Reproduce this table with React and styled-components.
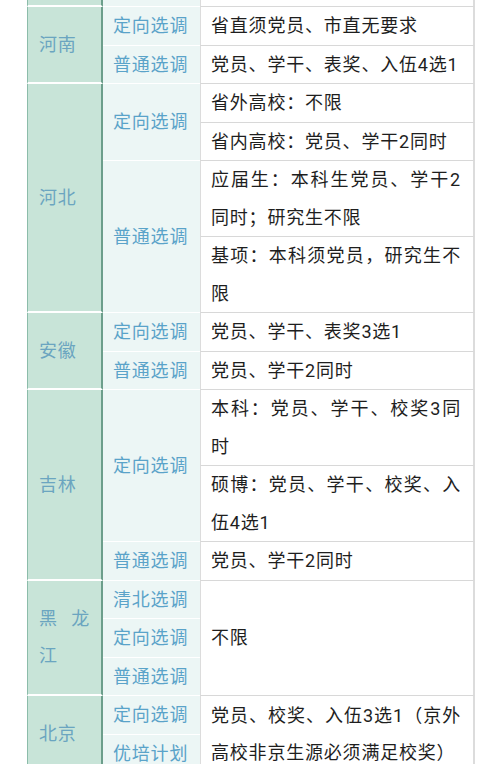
import React from "react";
import styled, { createGlobalStyle } from "styled-components";

const GlobalStyle = createGlobalStyle`
    body {
        margin: 0;
        background: #ffffff;
        font-family: Roboto, "Noto Sans CJK SC", sans-serif;
    }
`;

const blocks = [
    {
        name: "河南",
        groups: [
            { type: "定向选调", items: ["省直须党员、市直无要求"] },
            { type: "普通选调", items: ["党员、学干、表奖、入伍4选1"] },
        ],
    },
    {
        name: "河北",
        groups: [
            { type: "定向选调", items: ["省外高校：不限", "省内高校：党员、学干2同时"] },
            { type: "普通选调", items: ["应届生：本科生党员、学干2同时；研究生不限", "基项：本科须党员，研究生不限"] },
        ],
    },
    {
        name: "安徽",
        groups: [
            { type: "定向选调", items: ["党员、学干、表奖3选1"] },
            { type: "普通选调", items: ["党员、学干2同时"] },
        ],
    },
    {
        name: "吉林",
        groups: [
            { type: "定向选调", items: ["本科：党员、学干、校奖3同时", "硕博：党员、学干、校奖、入伍4选1"] },
            { type: "普通选调", items: ["党员、学干2同时"] },
        ],
    },
    {
        name: "黑龙江",
        shared: "不限",
        groups: [{ type: "清北选调" }, { type: "定向选调" }, { type: "普通选调" }],
    },
    {
        name: "北京",
        shared: "党员、校奖、入伍3选1（京外高校非京生源必须满足校奖）",
        groups: [{ type: "定向选调" }, { type: "优培计划" }],
    },
];

function buildRows(block, bi) {
    const rows = [];
    const total = block.shared
        ? block.groups.length
        : block.groups.reduce((n, g) => n + g.items.length, 0);

    block.groups.forEach((group, gi) => {
        const items = block.shared ? [null] : group.items;
        items.forEach((item, ii) => {
            const first = rows.length === 0;
            rows.push(
                <tr key={`${bi}-${gi}-${ii}`}>
                    {first && <Province rowSpan={total}>{block.name}</Province>}
                    {ii === 0 && <Type rowSpan={items.length}>{group.type}</Type>}
                    {block.shared
                        ? first && <Content rowSpan={total}>{block.shared}</Content>
                        : <Content>{item}</Content>}
                </tr>
            );
        });
    });
    return rows;
}

function App() {
    return (
        <>
            <GlobalStyle />
            <Page>
                <Table>
                    <colgroup>
                        <col style={{ width: 76 }} />
                        <col style={{ width: 97 }} />
                        <col style={{ width: 275 }} />
                    </colgroup>
                    <tbody>
                        <CutRow>
                            <Province />
                            <Type />
                            <Content />
                        </CutRow>
                        {blocks.map((b, i) => buildRows(b, i))}
                    </tbody>
                </Table>
            </Page>
        </>
    );
}

export default App;

const Page = styled.div`
    padding-left: 27px;
    background: #ffffff;
`;

const Table = styled.table`
    width: 448px;
    table-layout: fixed;
    border-collapse: separate;
    border-spacing: 0;
    font-size: 18px;
    letter-spacing: 0.8px;
    line-height: 37.5px;

    td {
        padding: 0;
        vertical-align: middle;
    }
`;

const CutRow = styled.tr`
    height: 7px;

    td {
        line-height: 0;
    }
`;

const Province = styled.td`
    && {
        padding: 0 11px;
    }
    background: #c8e4d8;
    color: #6ba5c0;
    text-align: justify;
    border-left: 1px solid #8cbcaa;
    border-right: 2px solid #6c9e8b;
    border-bottom: 2px solid #ffffff;
`;

const Type = styled.td`
    && {
        padding: 0 10px;
    }
    background: #ecf6f5;
    color: #5aa3c9;
    white-space: nowrap;
    border-bottom: 1px solid #ffffff;
`;

const Content = styled.td`
    && {
        padding: 0 12px 0 10px;
    }
    background: #ffffff;
    color: #1e1e1e;
    text-align: justify;
    border-left: 1px solid #dcdcdc;
    border-right: 2px solid #dcdcdc;
    border-bottom: 1px solid #d8d8d8;
`;
